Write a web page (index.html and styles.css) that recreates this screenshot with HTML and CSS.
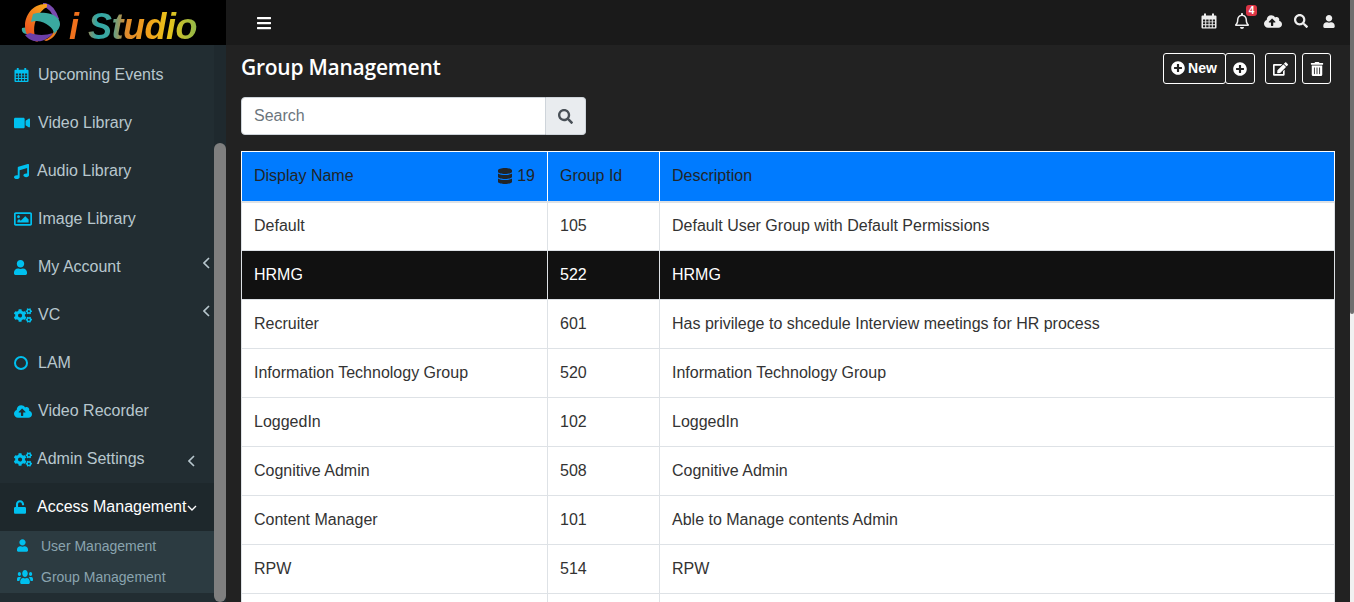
FILE: index.html
```html
<!DOCTYPE html>
<html lang="en">
  <head>
    <meta charset="UTF-8" />
    <meta name="viewport" content="width=device-width, initial-scale=1" />
    <title>iStudio | Group Management</title>
    <link rel="stylesheet" href="styles.css">
  </head>
  <body>
    <!-- icon sprite -->
    <svg class="sprite" xmlns="http://www.w3.org/2000/svg">
      <symbol id="i-bars" viewBox="0 0 448 512"><path d="M16 132h416c8.837 0 16-7.163 16-16V76c0-8.837-7.163-16-16-16H16C7.163 60 0 67.163 0 76v40c0 8.837 7.163 16 16 16zm0 160h416c8.837 0 16-7.163 16-16v-40c0-8.837-7.163-16-16-16H16c-8.837 0-16 7.163-16 16v40c0 8.837 7.163 16 16 16zm0 160h416c8.837 0 16-7.163 16-16v-40c0-8.837-7.163-16-16-16H16c-8.837 0-16 7.163-16 16v40c0 8.837 7.163 16 16 16z"/></symbol>
      <symbol id="i-calendar" viewBox="0 0 16 16"><path fill-rule="evenodd" d="M3 0.5h2v2h6v-2h2v2h1.5a1 1 0 0 1 1 1v11a1 1 0 0 1-1 1h-13a1 1 0 0 1-1-1v-11a1 1 0 0 1 1-1H3zM2 6.4v2h2.2v-2zM5.2 6.4v2h2.4v-2zM8.6 6.4v2h2.2v-2zM11.8 6.4v2H14v-2zM2 9.3v2h2.2v-2zM5.2 9.3v2h2.4v-2zM8.6 9.3v2h2.2v-2zM11.8 9.3v2H14v-2zM2 12.2v2h2.2v-2zM5.2 12.2v2h2.4v-2zM8.6 12.2v2h2.2v-2zM11.8 12.2v2H14v-2z"/></symbol>
      <symbol id="i-video" viewBox="0 64 576 384"><path d="M336.2 64H47.8C21.4 64 0 85.4 0 111.8v288.4C0 426.6 21.4 448 47.8 448h288.4c26.4 0 47.8-21.4 47.8-47.8V111.8c0-26.4-21.4-47.8-47.8-47.8zm189.4 37.7L416 177.3v157.4l109.6 75.5c21.2 14.6 50.4-.3 50.4-25.8V127.5c0-25.4-29.1-40.4-50.4-25.8z"/></symbol>
      <symbol id="i-music" viewBox="0 0 512 512"><path d="M470.38 1.51L150.41 96A32 32 0 0 0 128 126.51v261.41A139 139 0 0 0 96 384c-53 0-96 28.66-96 64s43 64 96 64 96-28.66 96-64V214.32l256-75v184.61a138.4 138.4 0 0 0-32-3.93c-53 0-96 28.66-96 64s43 64 96 64 96-28.65 96-64V32a32 32 0 0 0-41.62-30.49z"/></symbol>
      <symbol id="i-image" viewBox="0 64 512 384"><path d="M464 64H48C21.49 64 0 85.49 0 112v288c0 26.51 21.49 48 48 48h416c26.51 0 48-21.49 48-48V112c0-26.51-21.49-48-48-48zm-6 336H54a6 6 0 0 1-6-6V118a6 6 0 0 1 6-6h404a6 6 0 0 1 6 6v276a6 6 0 0 1-6 6zM128 152c-22.091 0-40 17.909-40 40s17.909 40 40 40 40-17.909 40-40-17.909-40-40-40zM96 352h320v-80l-87.515-87.515c-4.686-4.686-12.284-4.686-16.971 0L192 304l-39.515-39.515c-4.686-4.686-12.284-4.686-16.971 0L96 304v48z"/></symbol>
      <symbol id="i-user" viewBox="0 0 448 512"><path d="M224 256c70.7 0 128-57.3 128-128S294.7 0 224 0 96 57.3 96 128s57.3 128 128 128zm89.6 32h-16.7c-22.2 10.2-46.9 16-72.9 16s-50.6-5.8-72.9-16h-16.7C60.2 288 0 348.2 0 422.4V464c0 26.5 21.5 48 48 48h352c26.5 0 48-21.5 48-48v-41.6c0-74.2-60.2-134.4-134.4-134.4z"/></symbol>
      <symbol id="i-users" viewBox="0 32 640 448" preserveAspectRatio="none"><path d="M96 224c35.3 0 64-28.7 64-64s-28.7-64-64-64-64 28.7-64 64 28.7 64 64 64zm448 0c35.3 0 64-28.7 64-64s-28.7-64-64-64-64 28.7-64 64 28.7 64 64 64zm32 32h-64c-17.6 0-33.5 7.1-45.1 18.6 40.3 22.1 68.9 62 75.1 109.4h66c17.7 0 32-14.3 32-32v-32c0-35.3-28.7-64-64-64zm-256 0c61.9 0 112-50.1 112-112S381.9 32 320 32 208 82.1 208 144s50.1 112 112 112zm76.8 32h-8.3c-20.8 10-43.9 16-68.5 16s-47.6-6-68.5-16h-8.3C179.6 288 128 339.6 128 403.2V432c0 26.5 21.5 48 48 48h288c26.5 0 48-21.5 48-48v-28.8c0-63.6-51.6-115.2-115.2-115.2zm-223.7-13.4C161.5 263.1 145.6 256 128 256H64c-35.3 0-64 28.7-64 64v32c0 17.7 14.3 32 32 32h65.9c6.3-47.4 34.9-87.3 75.2-109.4z"/></symbol>
      <symbol id="i-cogs" viewBox="0 0 640 512"><path d="M512.1 191l-8.2 14.3c-3 5.3-9.4 7.5-15.1 5.4-11.8-4.4-22.6-10.7-32.1-18.6-4.6-3.8-5.8-10.5-2.8-15.7l8.2-14.3c-6.9-8-12.3-17.3-15.9-27.4h-16.5c-6 0-11.2-4.3-12.2-10.3-2-12-2.1-24.6 0-37.1 1-6 6.2-10.4 12.2-10.4h16.5c3.6-10.1 9-19.4 15.9-27.4l-8.2-14.3c-3-5.2-1.9-11.9 2.8-15.7 9.5-7.9 20.4-14.2 32.1-18.6 5.7-2.1 12.1.1 15.1 5.4l8.2 14.3c10.5-1.9 21.2-1.9 31.7 0L552 6.3c3-5.3 9.4-7.5 15.1-5.4 11.8 4.4 22.6 10.7 32.1 18.6 4.6 3.8 5.8 10.5 2.8 15.7l-8.2 14.3c6.9 8 12.3 17.3 15.9 27.4h16.5c6 0 11.2 4.3 12.2 10.3 2 12 2.1 24.6 0 37.1-1 6-6.2 10.4-12.2 10.4h-16.5c-3.6 10.1-9 19.4-15.9 27.4l8.2 14.3c3 5.2 1.9 11.9-2.8 15.7-9.5 7.9-20.4 14.2-32.1 18.6-5.7 2.1-12.1-.1-15.1-5.4l-8.2-14.3c-10.4 1.9-21.2 1.9-31.7 0zm-10.5-58.8c38.5 29.6 82.4-14.3 52.8-52.8-38.5-29.7-82.4 14.3-52.8 52.8zM386.3 286.1l33.7 16.8c10.1 5.8 14.5 18.1 10.5 29.1-8.9 24.2-26.4 46.4-42.6 65.8-7.4 8.9-20.2 11.1-30.3 5.3l-29.1-16.8c-16 13.7-34.6 24.6-54.9 31.7v33.6c0 11.6-8.3 21.6-19.7 23.6-24.6 4.2-50.4 4.4-75.9 0-11.5-2-20-11.9-20-23.6V418c-20.3-7.2-38.9-18-54.9-31.7L74 403c-10 5.8-22.9 3.6-30.3-5.3-16.2-19.4-33.3-41.6-42.2-65.7-4-10.9.4-23.2 10.5-29.1l33.3-16.8c-3.9-20.9-3.9-42.4 0-63.4L12 205.8c-10.1-5.8-14.6-18.1-10.5-29 8.9-24.2 26-46.4 42.2-65.8 7.4-8.9 20.2-11.1 30.3-5.3l29.1 16.8c16-13.7 34.6-24.6 54.9-31.7V57.1c0-11.5 8.2-21.5 19.6-23.5 24.6-4.2 50.5-4.4 76-.1 11.5 2 20 11.9 20 23.6v33.6c20.3 7.2 38.9 18 54.9 31.7l29.1-16.8c10-5.8 22.9-3.6 30.3 5.3 16.2 19.4 33.2 41.6 42.1 65.8 4 10.9.1 23.2-10 29.1l-33.7 16.8c3.9 21 3.9 42.5 0 63.5zm-117.6 21.1c59.2-77-28.7-164.9-105.7-105.7-59.2 77 28.7 164.9 105.7 105.7zm243.4 182.7l-8.2 14.3c-3 5.3-9.4 7.5-15.1 5.4-11.8-4.4-22.6-10.7-32.1-18.6-4.6-3.8-5.8-10.5-2.8-15.7l8.2-14.3c-6.9-8-12.3-17.3-15.9-27.4h-16.5c-6 0-11.2-4.3-12.2-10.3-2-12-2.1-24.6 0-37.1 1-6 6.2-10.4 12.2-10.4h16.5c3.6-10.1 9-19.4 15.9-27.4l-8.2-14.3c-3-5.2-1.9-11.9 2.8-15.7 9.5-7.9 20.4-14.2 32.1-18.6 5.7-2.1 12.1.1 15.1 5.4l8.2 14.3c10.5-1.9 21.2-1.9 31.7 0l8.2-14.3c3-5.3 9.4-7.5 15.1-5.4 11.8 4.4 22.6 10.7 32.1 18.6 4.6 3.8 5.8 10.5 2.8 15.7l-8.2 14.3c6.9 8 12.3 17.3 15.9 27.4h16.5c6 0 11.2 4.3 12.2 10.3 2 12 2.1 24.6 0 37.1-1 6-6.2 10.4-12.2 10.4h-16.5c-3.6 10.1-9 19.4-15.9 27.4l8.2 14.3c3 5.2 1.9 11.9-2.8 15.7-9.5 7.9-20.4 14.2-32.1 18.6-5.7 2.1-12.1-.1-15.1-5.4l-8.2-14.3c-10.4 1.9-21.2 1.9-31.7 0zM501.6 431c38.5 29.6 82.4-14.3 52.8-52.8-38.5-29.6-82.4 14.3-52.8 52.8z"/></symbol>
      <symbol id="i-cloud" viewBox="0 32 640 448"><path d="M537.6 226.6c4.1-10.7 6.4-22.4 6.4-34.6 0-53-43-96-96-96-19.7 0-38.1 6-53.3 16.2C367 64.2 315.3 32 256 32c-88.4 0-160 71.6-160 160 0 2.7.1 5.4.2 8.1C40.2 219.8 0 273.2 0 336c0 79.5 64.5 144 144 144h368c70.7 0 128-57.3 128-128 0-61.9-44-113.6-102.4-125.4zM393.4 288H328v112c0 8.8-7.2 16-16 16h-48c-8.8 0-16-7.2-16-16V288h-65.4c-14.3 0-21.4-17.2-11.3-27.3l105.4-105.4c6.2-6.2 16.4-6.2 22.6 0l105.4 105.4c10.1 10.1 2.9 27.3-11.3 27.3z"/></symbol>
      <symbol id="i-unlock" viewBox="0 0 448 512"><path d="M400 256H152V152.9c0-39.6 31.7-72.5 71.3-72.9 40-.4 72.7 32.1 72.7 72v16c0 13.3 10.7 24 24 24h32c13.3 0 24-10.7 24-24v-16C376 68 307.5-.3 223.5 0 139.5.3 72 69.5 72 153.5V256H48c-26.5 0-48 21.5-48 48v160c0 26.5 21.5 48 48 48h352c26.5 0 48-21.5 48-48V304c0-26.5-21.5-48-48-48z"/></symbol>
      <symbol id="i-left" viewBox="0 0 7 12"><path d="M6 1L1 6l5 5" fill="none" stroke="currentColor" stroke-width="1.6"/></symbol>
      <symbol id="i-down" viewBox="0 0 10 6"><path d="M1 1l4 4 4-4" fill="none" stroke="currentColor" stroke-width="1.4"/></symbol>
      <symbol id="i-bell" viewBox="0 0 448 512"><path d="M439.39 362.29c-19.32-20.76-55.47-51.99-55.47-154.29 0-77.7-54.48-139.9-127.94-155.16V32c0-17.67-14.32-32-31.98-32s-31.98 14.33-31.98 32v20.84C118.56 68.1 64.08 130.3 64.08 208c0 102.3-36.15 133.53-55.47 154.29-6 6.45-8.66 14.16-8.61 21.71.11 16.4 12.98 32 32.1 32h383.8c19.12 0 32-15.6 32.1-32 .05-7.55-2.61-15.27-8.61-21.71zM67.53 368c21.22-27.97 44.42-74.33 44.53-159.42 0-.2-.06-.38-.06-.58 0-61.86 50.14-112 112-112s112 50.14 112 112c0 .2-.06.38-.06.58.11 85.1 23.31 131.46 44.53 159.42H67.53zM224 512c35.32 0 63.97-28.65 63.97-64H160.03c0 35.35 28.65 64 63.97 64z"/></symbol>
      <symbol id="i-search" viewBox="0 0 512 512"><path d="M505 442.7L405.3 343c-4.5-4.5-10.6-7-17-7H372c27.6-35.3 44-79.7 44-128C416 93.1 322.9 0 208 0S0 93.1 0 208s93.1 208 208 208c48.3 0 92.7-16.4 128-44v16.3c0 6.4 2.5 12.5 7 17l99.7 99.7c9.4 9.4 24.6 9.4 33.9 0l28.3-28.3c9.4-9.4 9.4-24.6.1-34zM208 336c-70.7 0-128-57.2-128-128 0-70.7 57.2-128 128-128 70.7 0 128 57.2 128 128 0 70.7-57.2 128-128 128z"/></symbol>
      <symbol id="i-plus" viewBox="0 0 512 512"><path d="M256 8C119 8 8 119 8 256s111 248 248 248 248-111 248-248S393 8 256 8zm144 276c0 6.6-5.4 12-12 12h-92v92c0 6.6-5.4 12-12 12h-56c-6.6 0-12-5.4-12-12v-92h-92c-6.6 0-12-5.4-12-12v-56c0-6.6 5.4-12 12-12h92v-92c0-6.6 5.4-12 12-12h56c6.6 0 12 5.4 12 12v92h92c6.6 0 12 5.4 12 12v56z"/></symbol>
      <symbol id="i-edit" viewBox="0 0 576 512"><path d="M402.6 83.2l90.2 90.2c3.8 3.8 3.8 10 0 13.8L274.4 405.6l-92.8 10.3c-12.4 1.4-22.9-9.1-21.5-21.5l10.3-92.8L388.8 83.2c3.8-3.8 10-3.8 13.8 0zm162-22.9l-48.8-48.8c-15.2-15.2-39.9-15.2-55.2 0l-35.4 35.4c-3.8 3.8-3.8 10 0 13.8l90.2 90.2c3.8 3.8 10 3.8 13.8 0l35.4-35.4c15.2-15.3 15.2-40 0-55.2zM384 346.2V448H64V128h229.8c3.2 0 6.2-1.3 8.5-3.5l40-40c7.6-7.6 2.2-20.5-8.5-20.5H48C21.5 64 0 85.5 0 112v352c0 26.5 21.5 48 48 48h352c26.5 0 48-21.5 48-48V306.2c0-10.7-12.9-16-20.5-8.5l-40 40c-2.2 2.3-3.5 5.3-3.5 8.5z"/></symbol>
      <symbol id="i-trash" viewBox="0 0 448 512"><path d="M32 464a48 48 0 0 0 48 48h288a48 48 0 0 0 48-48V128H32zm272-256a16 16 0 0 1 32 0v224a16 16 0 0 1-32 0zm-96 0a16 16 0 0 1 32 0v224a16 16 0 0 1-32 0zm-96 0a16 16 0 0 1 32 0v224a16 16 0 0 1-32 0zM432 32H312l-9.4-18.7A24 24 0 0 0 281.1 0H166.8a23.72 23.72 0 0 0-21.4 13.3L136 32H16A16 16 0 0 0 0 48v32a16 16 0 0 0 16 16h416a16 16 0 0 0 16-16V48a16 16 0 0 0-16-16z"/></symbol>
      <symbol id="i-database" viewBox="0 0 448 512"><path d="M448 73.143v45.714C448 159.143 347.667 192 224 192S0 159.143 0 118.857V73.143C0 32.857 100.333 0 224 0s224 32.857 224 73.143zM448 176v102.857C448 319.143 347.667 352 224 352S0 319.143 0 278.857V176c48.125 33.143 136.208 48.572 224 48.572S399.874 209.143 448 176zm0 160v102.857C448 479.143 347.667 512 224 512S0 479.143 0 438.857V336c48.125 33.143 136.208 48.572 224 48.572S399.874 369.143 448 336z"/></symbol>
    </svg>

    <!-- Top bar -->
    <header class="topbar">
      <div class="brand">
        <svg class="brand-mark" viewBox="21 2 41 40" aria-hidden="true">
          <defs>
            <linearGradient id="ring-orange" x1="0.7" y1="0" x2="0.2" y2="1">
              <stop offset="0" stop-color="#f7a11c" />
              <stop offset="1" stop-color="#e8431f" />
            </linearGradient>
          </defs>
          <path d="M43 4c6 0 11 6 14 15" fill="none" stroke="#7a4bb0" stroke-width="4.5" />
          <path d="M22 27c-1 4 2 7 9 6l-3-7z" fill="#3aa9a0" />
          <path d="M47 3C33 2 25 14 25 25c0 8 4 14 13 16-5-6-5-17-1-24 2-5 6-9 10-11z" fill="url(#ring-orange)" />
          <path d="M25 34c5 7 15 8 21 4 4-2 6-4 7-6-8 3-18 2-23 0z" fill="#6b3fa8" />
          <path d="M46 40c5-1 10-6 11-10h-3c-2 5-6 8-10 9z" fill="#ee7a1e" />
          <path d="M33 13c4-1.500 9-1.500 13-1 8 1 14 5 14 11 0 4-3 7-6 10 0-6-8-12-17-13-2 0-4 0-6 1z" fill="#3aa9a0" />
        </svg>
        <span class="brand-name">i Studio</span>
      </div>
      <div class="topnav">
        <svg class="ico menu-btn"><use href="#i-bars" /></svg>
        <div class="top-icons">
          <svg class="ico top-cal"><use href="#i-calendar" /></svg>
          <span class="bell">
            <svg class="ico top-bell"><use href="#i-bell" /></svg>
            <span class="badge">4</span>
          </span>
          <svg class="ico top-cloud"><use href="#i-cloud" /></svg>
          <svg class="ico top-search"><use href="#i-search" /></svg>
          <svg class="ico top-user"><use href="#i-user" /></svg>
        </div>
      </div>
    </header>

    <div class="layout">
      <!-- Sidebar -->
      <aside class="sidebar">
        <ul class="side-menu">
          <li class="side-item"><span class="slot"><svg class="ico s-cal"><use href="#i-calendar" /></svg></span>Upcoming Events</li>
          <li class="side-item"><span class="slot"><svg class="ico s-video"><use href="#i-video" /></svg></span>Video Library</li>
          <li class="side-item tight"><span class="slot"><svg class="ico s-music"><use href="#i-music" /></svg></span>Audio Library</li>
          <li class="side-item"><span class="slot"><svg class="ico s-image"><use href="#i-image" /></svg></span>Image Library</li>
          <li class="side-item"><span class="slot"><svg class="ico s-user"><use href="#i-user" /></svg></span>My Account<svg class="ico side-arrow"><use href="#i-left" /></svg></li>
          <li class="side-item"><span class="slot"><svg class="ico s-cogs"><use href="#i-cogs" /></svg></span>VC<svg class="ico side-arrow"><use href="#i-left" /></svg></li>
          <li class="side-item"><span class="slot"><span class="ring"></span></span>LAM</li>
          <li class="side-item"><span class="slot"><svg class="ico s-cloud"><use href="#i-cloud" /></svg></span>Video Recorder</li>
          <li class="side-item tight"><span class="slot"><svg class="ico s-cogs"><use href="#i-cogs" /></svg></span>Admin Settings<svg class="ico side-arrow low"><use href="#i-left" /></svg></li>
          <li class="side-item tight open"><span class="slot"><svg class="ico s-lock"><use href="#i-unlock" /></svg></span>Access Management<svg class="ico side-caret"><use href="#i-down" /></svg></li>
        </ul>
        <ul class="side-sub">
          <li class="sub-item"><span class="sub-slot"><svg class="ico sub-user"><use href="#i-user" /></svg></span>User Management</li>
          <li class="sub-item"><span class="sub-slot"><svg class="ico sub-users"><use href="#i-users" /></svg></span>Group Management</li>
        </ul>
        <div class="side-track"><div class="side-thumb"></div></div>
      </aside>

      <!-- Content -->
      <main class="content">
        <div class="page-head">
          <h1 class="page-title">Group Management</h1>
          <div class="actions">
            <button class="btn btn-new"><svg class="ico"><use href="#i-plus" /></svg>New</button>
            <button class="btn btn-add"><svg class="ico"><use href="#i-plus" /></svg></button>
            <button class="btn btn-edit"><svg class="ico"><use href="#i-edit" /></svg></button>
            <button class="btn btn-del"><svg class="ico"><use href="#i-trash" /></svg></button>
          </div>
        </div>

        <div class="search">
          <div class="search-input">Search</div>
          <div class="search-btn"><svg class="ico"><use href="#i-search" /></svg></div>
        </div>

        <table class="groups">
          <thead>
            <tr>
              <th class="col-name">
                <div class="th-row">Display Name<span class="count"><svg class="ico"><use href="#i-database" /></svg>19</span></div>
              </th>
              <th class="col-id">Group Id</th>
              <th>Description</th>
            </tr>
          </thead>
          <tbody>
            <tr><td>Default</td><td>105</td><td>Default User Group with Default Permissions</td></tr>
            <tr class="selected"><td>HRMG</td><td>522</td><td>HRMG</td></tr>
            <tr><td>Recruiter</td><td>601</td><td>Has privilege to shcedule Interview meetings for HR process</td></tr>
            <tr><td>Information Technology Group</td><td>520</td><td>Information Technology Group</td></tr>
            <tr><td>LoggedIn</td><td>102</td><td>LoggedIn</td></tr>
            <tr><td>Cognitive Admin</td><td>508</td><td>Cognitive Admin</td></tr>
            <tr><td>Content Manager</td><td>101</td><td>Able to Manage contents Admin</td></tr>
            <tr><td>RPW</td><td>514</td><td>RPW</td></tr>
            <tr><td>&nbsp;</td><td>&nbsp;</td><td>&nbsp;</td></tr>
          </tbody>
        </table>
      </main>
    </div>

    <!-- Page scrollbar -->
    <div class="page-scroll"><div class="page-thumb"></div></div>
  </body>
</html>
```

FILE: styles.css
```css
* {
  box-sizing: border-box;
}

html,
body {
  height: 100%;
}

body {
  margin: 0;
  font-family: "Liberation Sans", Arial, sans-serif;
  font-size: 16px;
  color: #333;
  background: #222;
  overflow: hidden;
}

.sprite {
  display: none;
}

.ico {
  display: block;
  fill: currentColor;
  flex: none;
}

/* Top bar */
.topbar {
  display: flex;
  height: 45px;
}

.brand {
  width: 226px;
  flex: none;
  background: #000;
  display: flex;
  align-items: center;
  padding-left: 21px;
}

.brand-mark {
  width: 41px;
  height: 40px;
  flex: none;
}

.brand-name {
  margin-left: 7px;
  margin-top: 9px;
  font-size: 36px;
  line-height: 36px;
  font-weight: bold;
  font-style: italic;
  letter-spacing: -0.5px;
  background: linear-gradient(90deg, #f0711c 0%, #f0711c 8%, #2fa9a8 22%, #3fa7a0 32%, #e08a2c 45%, #f0a01a 62%, #e8c41a 78%, #8fb84a 100%);
  -webkit-background-clip: text;
  background-clip: text;
  color: transparent;
}

.topnav {
  flex: 1;
  background: #1a1a1a;
  display: flex;
  align-items: center;
  justify-content: space-between;
  padding-left: 31px;
  padding-right: 18px;
  color: #fff;
}

.menu-btn {
  width: 14px;
  height: 16px;
}

.top-icons {
  display: flex;
  align-items: center;
  padding-bottom: 3px;
  color: #eee;
}

.top-cal {
  width: 16px;
  height: 16px;
}

.bell {
  position: relative;
  margin-left: 18px;
}

.top-bell {
  width: 14px;
  height: 16px;
}

.badge {
  position: absolute;
  top: -8px;
  left: 11px;
  width: 11px;
  height: 11px;
  border-radius: 3px;
  background: #dc3545;
  color: #fff;
  font-size: 10px;
  font-weight: bold;
  line-height: 11px;
  text-align: center;
}

.top-cloud {
  width: 18px;
  height: 13px;
  margin-left: 15px;
}

.top-search {
  width: 14px;
  height: 14px;
  margin-left: 12px;
}

.top-user {
  width: 14px;
  height: 13px;
  margin-left: 14px;
}

.layout {
  display: flex;
  height: 557px;
}

/* Sidebar */
.sidebar {
  position: relative;
  width: 226px;
  flex: none;
  background: #222d32;
  overflow: hidden;
  padding-top: 6px;
}

.side-menu,
.side-sub {
  list-style: none;
  margin: 0;
  padding: 0;
}

.side-item {
  display: flex;
  align-items: center;
  height: 48px;
  width: 214px;
  padding-left: 14px;
  color: #b8c7ce;
}

.slot {
  width: 24px;
  flex: none;
  color: #00c0ef;
}

.tight .slot {
  width: 23px;
}

.s-cal {
  width: 15px;
  height: 16px;
}

.s-video {
  width: 16px;
  height: 12px;
}

.s-music {
  width: 15px;
  height: 15px;
}

.s-image {
  width: 18px;
  height: 14px;
}

.s-user {
  width: 13px;
  height: 15px;
}

.s-cogs {
  width: 18px;
  height: 15px;
}

.s-cloud {
  width: 18px;
  height: 13px;
}

.s-lock {
  width: 12px;
  height: 14px;
}

.ring {
  display: block;
  width: 14px;
  height: 14px;
  border: 2px solid #00c0ef;
  border-radius: 50%;
}

.side-arrow {
  width: 7px;
  height: 12px;
  margin-left: auto;
  margin-right: 4px;
  margin-top: -9px;
}

.side-arrow.low {
  margin-right: 19px;
  margin-top: 4px;
}

.side-item.open {
  background: #1e282c;
  color: #fff;
}

.side-caret {
  width: 10px;
  height: 6px;
  margin-left: 1px;
  margin-top: 2px;
}

.side-sub {
  width: 214px;
  background: #2c3b41;
}

.sub-item {
  display: flex;
  align-items: center;
  height: 31px;
  padding: 0 0 2px 17px;
  font-size: 14px;
  color: #8aa4af;
}

.sub-slot {
  width: 24px;
  flex: none;
  color: #00c0ef;
}

.sub-user {
  width: 11px;
  height: 13px;
}

.sub-users {
  width: 16px;
  height: 14px;
}

.side-track {
  position: absolute;
  top: 0;
  right: 0;
  bottom: 0;
  width: 12px;
  background: #1f292e;
}

.side-thumb {
  margin-top: 98px;
  height: 459px;
  border-radius: 6px;
  background: #7f7f7f;
}

/* Content */
.content {
  flex: 1;
  padding: 0 23px 0 15px;
  background: #222;
  overflow: hidden;
}

.page-head {
  display: flex;
  justify-content: space-between;
  align-items: flex-start;
  padding-top: 8px;
  height: 52px;
}

.page-title {
  margin: 0;
  font-family: "Open Sans", sans-serif;
  font-size: 21px;
  font-weight: 600;
  letter-spacing: -0.25px;
  line-height: 28px;
  color: #fff;
}

.actions {
  display: flex;
}

.btn {
  display: flex;
  align-items: center;
  justify-content: center;
  height: 31px;
  padding: 0;
  border: 1px solid #fff;
  border-radius: 3px;
  background: transparent;
  color: #fff;
  font-family: inherit;
  font-size: 14px;
  font-weight: bold;
}

.btn .ico {
  width: 14px;
  height: 14px;
}

.btn-new {
  width: 63px;
  gap: 3px;
  padding: 0 1px 1px 0;
}

.btn-add {
  width: 30px;
  margin-left: -1px;
}

.btn-edit {
  width: 31px;
  margin-left: 10px;
}

.btn-edit .ico {
  width: 15px;
}

.btn-del {
  width: 29px;
  margin-left: 6px;
}

.search {
  display: flex;
  width: 345px;
  height: 38px;
}

.search-input {
  flex: 1;
  display: flex;
  align-items: center;
  padding-left: 12px;
  background: #fff;
  border: 1px solid #ced4da;
  border-radius: 4px 0 0 4px;
  color: #6c757d;
}

.search-btn {
  width: 40px;
  display: flex;
  align-items: center;
  justify-content: center;
  background: #e9ecef;
  border: 1px solid #ced4da;
  border-left: 0;
  border-radius: 0 4px 4px 0;
  color: #495057;
}

.search-btn .ico {
  width: 15px;
  height: 15px;
}

/* Table */
.groups {
  width: 1094px;
  margin-top: 16px;
  border-collapse: collapse;
  table-layout: fixed;
  background: #fff;
}

.groups th,
.groups td {
  border: 1px solid #dee2e6;
  padding: 0 12px;
  font-weight: normal;
  text-align: left;
  height: 49px;
}

.groups th {
  height: 50px;
  padding-bottom: 1px;
  background: #007bff;
  border-color: #fff;
  border-bottom: 2px solid #dee2e6;
  color: #212529;
}

.col-name {
  width: 306px;
}

.col-id {
  width: 112px;
}

.th-row {
  display: flex;
  justify-content: space-between;
  align-items: center;
}

.count {
  display: flex;
  align-items: center;
  gap: 5px;
}

.count .ico {
  width: 14px;
  height: 16px;
}

.selected td {
  background: #111;
  color: #fff;
}

/* Page scrollbar */
.page-scroll {
  position: absolute;
  top: 0;
  right: 0;
  bottom: 0;
  width: 4px;
  background: #f1f1f1;
}

.page-thumb {
  height: 314px;
  background: #6f6f6f;
  border-radius: 0 0 2px 2px;
}
```
